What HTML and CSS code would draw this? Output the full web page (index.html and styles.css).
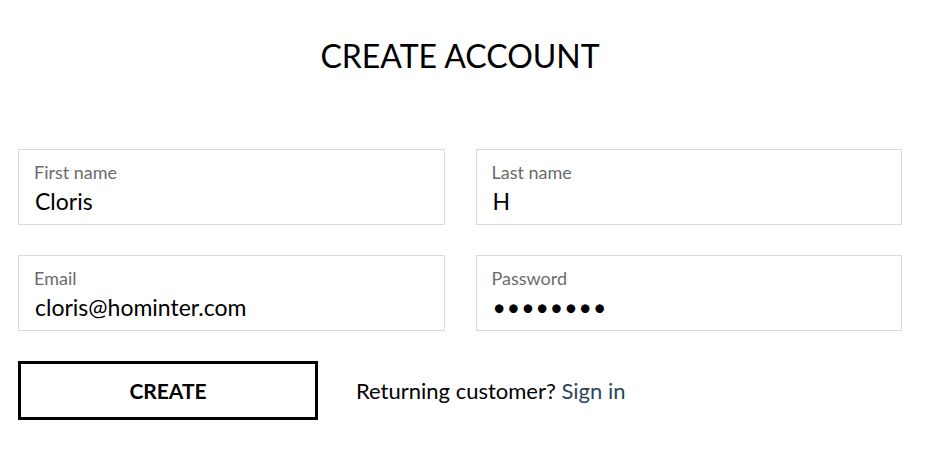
FILE: index.html
```html
<!DOCTYPE html>
<html lang="en">
<head>
    <meta charset="UTF-8">
    <meta name="viewport" content="width=device-width, initial-scale=1.0">
    <title>Create Account</title>
    <link rel="stylesheet" href="styles.css">
</head>
<body>
    <div class="container">
        <h1 class="title">CREATE ACCOUNT</h1>
        <form id="registerForm" class="register">
            <div class="fields">
                <label class="field">
                    <span class="field-label">First name</span>
                    <input type="text" value="Cloris">
                </label>
                <label class="field">
                    <span class="field-label">Last name</span>
                    <input type="text" value="H">
                </label>
                <label class="field">
                    <span class="field-label">Email</span>
                    <input type="email" value="cloris@hominter.com">
                </label>
                <label class="field">
                    <span class="field-label">Password</span>
                    <input type="password" value="password" class="password">
                </label>
            </div>
            <div class="actions">
                <button type="submit">CREATE</button>
                <p class="returning">Returning customer? <a href="#">Sign in</a></p>
            </div>
        </form>
    </div>
</body>
</html>
```

FILE: styles.css
```css
body {
    font-family: Lato, "Liberation Sans", sans-serif;
    margin: 0;
    background: #fff;
    color: #000;
}
.container {
    padding: 0 29px 0 18px;
}
.title {
    margin: 0;
    padding-top: 37px;
    height: 149px;
    box-sizing: border-box;
    text-align: center;
    font-weight: 400;
    font-size: 32px;
    line-height: 38px;
}
.fields {
    display: grid;
    grid-template-columns: 1fr 1fr;
    column-gap: 31px;
    row-gap: 30px;
}
.field {
    display: flex;
    flex-direction: column;
    height: 76px;
    box-sizing: border-box;
    border: 1px solid #dadada;
    padding: 11px 15px 0 15px;
}
.field-label {
    font-size: 18px;
    line-height: 22px;
    color: #6b6b6b;
}
.field input {
    border: none;
    outline: none;
    padding: 0 0 0 1px;
    margin: 3px 0 0 0;
    font-family: inherit;
    font-size: 23px;
    line-height: 30px;
    color: #000;
    background: transparent;
}
.field input.password {
    font-size: 23px;
    letter-spacing: 1px;
}
.actions {
    display: flex;
    align-items: center;
    gap: 38px;
    margin-top: 30px;
}
button {
    width: 300px;
    height: 59px;
    border: 3px solid #000;
    background: #fff;
    font-family: inherit;
    font-size: 21px;
    font-weight: 700;
    color: #000;
    padding: 0;
}
.returning {
    margin: 0;
    font-size: 22px;
}
.returning a {
    color: #2c4657;
    text-decoration: none;
}
```
